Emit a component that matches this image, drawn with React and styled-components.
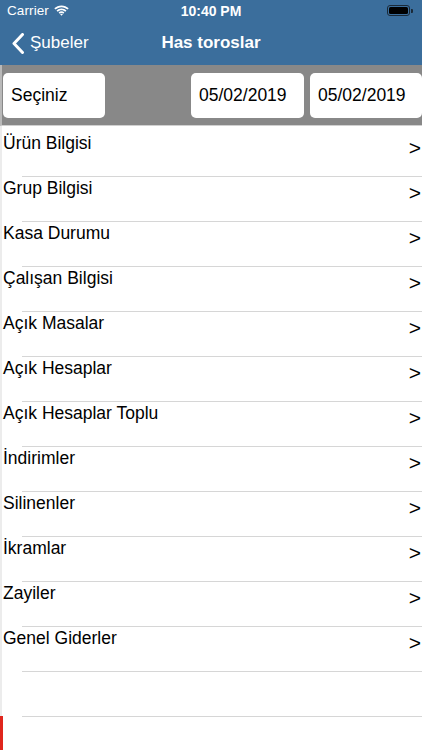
import React from "react";
import styled, { createGlobalStyle } from "styled-components";

const Global = createGlobalStyle`
  html, body { margin: 0; padding: 0; background: #fff; }
  body { font-family: "Liberation Sans", Arial, sans-serif; -webkit-font-smoothing: antialiased; }
  * { box-sizing: border-box; }
`;

const Screen = styled.div`
  position: relative;
  width: 422px;
  height: 750px;
  overflow: hidden;
  background: #fff;
  display: flex;
  flex-direction: column;
`;

const Header = styled.div`
  flex-shrink: 0;
  background: #3b6e9c;
  color: #fff;
  height: 65px;
  display: flex;
  flex-direction: column;
`;

const StatusBar = styled.div`
  height: 21px;
  display: grid;
  grid-template-columns: 1fr auto 1fr;
  align-items: center;
  padding: 0 7px 0 7px;
  font-size: 13.5px;
`;

const Carrier = styled.div`
  display: flex;
  align-items: center;
  gap: 5px;
  letter-spacing: 0.1px;
`;

const Time = styled.div`
  font-weight: 700;
  font-size: 14px;
`;

const Battery = styled.div`
  justify-self: end;
  display: flex;
  align-items: center;
  margin-right: 2px;
`;

const BatteryBody = styled.div`
  width: 23px;
  height: 11px;
  border: 1px solid #1b2a38;
  border-radius: 3px;
  padding: 1px;
  display: flex;
`;

const BatteryFill = styled.div`
  flex: 1;
  background: #000;
  border-radius: 1.5px;
`;

const BatteryNub = styled.div`
  width: 2px;
  height: 4px;
  background: #1b2a38;
  border-radius: 0 1px 1px 0;
  margin-left: 1px;
`;

const NavBar = styled.div`
  position: relative;
  flex: 1;
  display: flex;
  align-items: center;
  padding: 0 0 0 12px;
`;

const Back = styled.div`
  display: flex;
  align-items: center;
  gap: 5px;
  font-size: 17px;
`;

const Title = styled.div`
  position: absolute;
  left: 0;
  right: 0;
  text-align: center;
  font-size: 17px;
  font-weight: 700;
  pointer-events: none;
`;

const FilterBar = styled.div`
  flex-shrink: 0;
  height: 61px;
  background: #888888;
  border-left: 2px solid #b9b9b9;
  border-bottom: 1px solid #d0d0d0;
  display: flex;
  align-items: flex-start;
  padding: 8px 0 0 1px;
  gap: 6px;
`;

const Field = styled.div`
  background: #fff;
  border-radius: 5px;
  height: 45px;
  width: ${(p) => p.$w}px;
  display: flex;
  align-items: center;
  padding-left: ${(p) => p.$pl}px;
  font-size: 17.5px;
  color: #000;
  margin-right: ${(p) => (p.$grow ? "auto" : "0")};
`;

const List = styled.div`
  flex: 1;
  min-height: 0;
  overflow: hidden;
  padding-top: 6px;
  border-left: 2px solid #ececec;
`;

const Row = styled.div`
  position: relative;
  height: 45px;
  display: flex;
  align-items: flex-start;
  justify-content: space-between;
  padding: 1px 0 0 1px;
  &::after {
    content: "";
    position: absolute;
    left: 20px;
    right: 0;
    bottom: 0;
    height: 1px;
    background: #d6d6d6;
  }
`;

const Label = styled.div`
  font-size: 17.5px;
  line-height: 20px;
  color: #000;
`;

const Chevron = styled.div`
  font-size: 21px;
  line-height: 22px;
  margin-top: 4px;
  margin-right: 1px;
  color: #000;
`;

const RedMark = styled.div`
  position: absolute;
  left: 0;
  bottom: 0;
  width: 3px;
  height: 34px;
  background: #e0261d;
`;

const items = [
  "Ürün Bilgisi",
  "Grup Bilgisi",
  "Kasa Durumu",
  "Çalışan Bilgisi",
  "Açık Masalar",
  "Açık Hesaplar",
  "Açık Hesaplar Toplu",
  "İndirimler",
  "Silinenler",
  "İkramlar",
  "Zayiler",
  "Genel Giderler",
];

const Wifi = () => (
  <svg width="15" height="11" viewBox="0 0 15 11">
    <path d="M7.5 2.2c2.3 0 4.4.9 6 2.4l1.2-1.3C12.8 1.5 10.3.4 7.5.4S2.2 1.5.3 3.3l1.2 1.3c1.6-1.5 3.7-2.4 6-2.4z" fill="#fff" />
    <path d="M7.5 5.2c1.5 0 2.8.6 3.8 1.5l1.2-1.3C11.2 4.2 9.4 3.4 7.5 3.4S3.8 4.2 2.5 5.4l1.2 1.3c1-.9 2.3-1.5 3.8-1.5z" fill="#fff" />
    <path d="M7.5 8.1c.7 0 1.3.3 1.7.7l1.2-1.3c-.8-.7-1.8-1.2-2.9-1.2s-2.1.5-2.9 1.2l1.2 1.3c.4-.4 1-.7 1.7-.7zM7.5 10.8l1.4-1.5c-.4-.3-.9-.5-1.4-.5s-1 .2-1.4.5z" fill="#fff" />
  </svg>
);

const BackChevron = () => (
  <svg width="13" height="21" viewBox="0 0 13 21">
    <path d="M10.5 1.5 2 10.5l8.5 9" fill="none" stroke="#fff" strokeWidth="3" strokeLinecap="round" strokeLinejoin="round" />
  </svg>
);

export default function App() {
  return (
    <Screen>
      <Global />
      <Header>
        <StatusBar>
          <Carrier>
            Carrier <Wifi />
          </Carrier>
          <Time>10:40 PM</Time>
          <Battery>
            <BatteryBody>
              <BatteryFill />
            </BatteryBody>
            <BatteryNub />
          </Battery>
        </StatusBar>
        <NavBar>
          <Back>
            <BackChevron />
            Şubeler
          </Back>
          <Title>Has toroslar</Title>
        </NavBar>
      </Header>
      <FilterBar>
        <Field $w={102} $pl={8} $grow>
          Seçiniz
        </Field>
        <Field $w={113} $pl={8}>
          05/02/2019
        </Field>
        <Field $w={112} $pl={8}>
          05/02/2019
        </Field>
      </FilterBar>
      <List>
        {items.map((t) => (
          <Row key={t}>
            <Label>{t}</Label>
            <Chevron>&gt;</Chevron>
          </Row>
        ))}
        <Row />
        <Row />
      </List>
      <RedMark />
    </Screen>
  );
}
